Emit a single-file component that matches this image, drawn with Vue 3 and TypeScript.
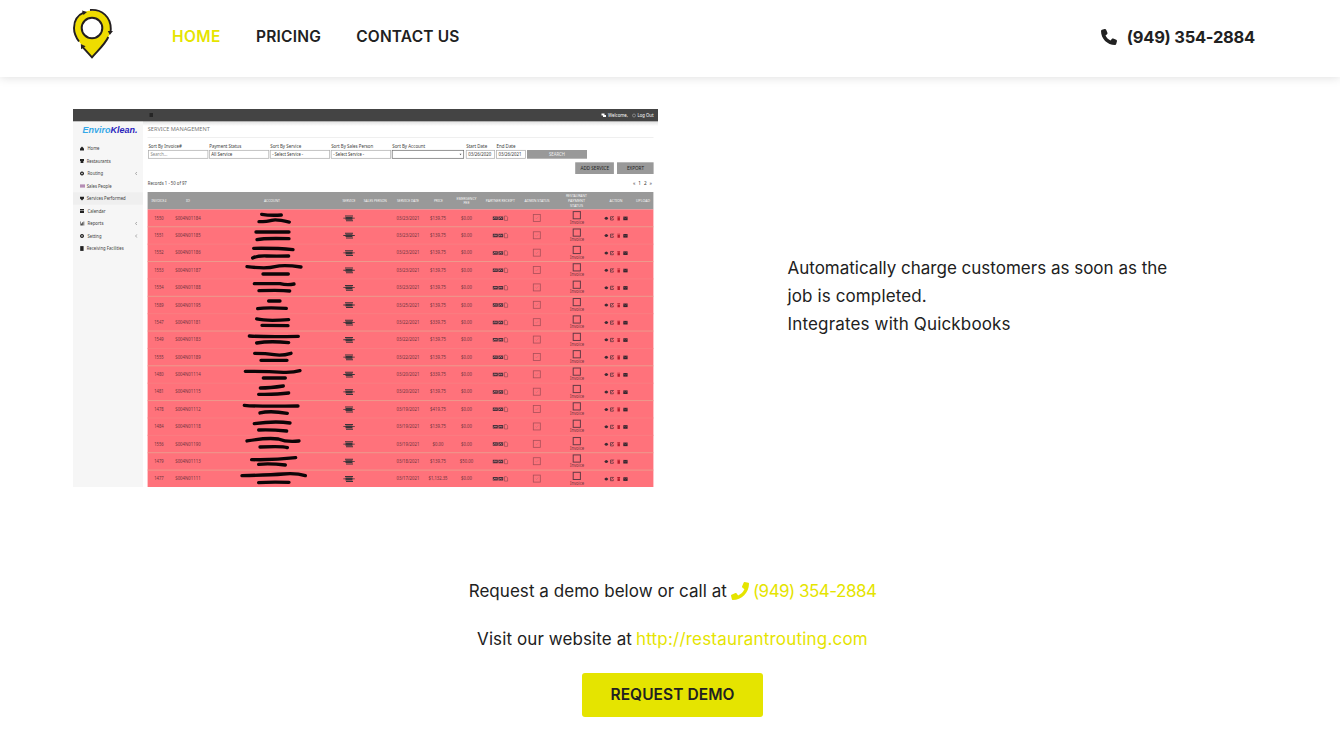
<script setup lang="ts">
interface ServiceRow {
  invoice: string
  id: string
  date: string
  price: string
  fee: string
  marks: string
}

const rowPitch = 17.38

const rows: ServiceRow[] = [
  { invoice: '1550', id: 'S004N01184', date: '03/23/2021', price: '$139.75', fee: '$0.00', marks: 'M365-107Q390-103 424-105M357-85Q382-85 395-89T448-84' },
  { invoice: '1551', id: 'S004N01185', date: '03/23/2021', price: '$139.75', fee: '$0.00', marks: 'M348-54L447-54M351-31Q370-36 447-34' },
  { invoice: '1552', id: 'S004N01186', date: '03/23/2021', price: '$139.75', fee: '$0.00', marks: 'M341-5Q410-6 459-1M338 24Q352 17 380 18T446 18' },
  { invoice: '1553', id: 'S004N01187', date: '03/23/2021', price: '$139.75', fee: '$0.00', marks: 'M321 50Q380 57 405 50T483 51M369 72L445 72' },
  { invoice: '1554', id: 'S004N01188', date: '03/23/2021', price: '$139.75', fee: '$0.00', marks: 'M343 101L420 101Q442 106 462 102M357 122Q425 120 449 123' },
  { invoice: '1589', id: 'S004N01195', date: '03/25/2021', price: '$139.75', fee: '$0.00', marks: 'M386 153L420 153M353 176Q378 172 439 175' },
  { invoice: '1547', id: 'S004N01181', date: '03/22/2021', price: '$339.75', fee: '$0.00', marks: 'M350 207Q380 214 446 209M366 226L444 227' },
  { invoice: '1549', id: 'S004N01183', date: '03/22/2021', price: '$139.75', fee: '$0.00', marks: 'M328 258Q380 261 475 259M350 279Q390 272 446 278' },
  { invoice: '1555', id: 'S004N01189', date: '03/22/2021', price: '$139.75', fee: '$0.00', marks: 'M344 310Q378 310 402 314T453 310M363 331L441 331' },
  { invoice: '1480', id: 'S004N01114', date: '03/20/2021', price: '$339.75', fee: '$0.00', marks: 'M316 364Q380 364 430 367Q460 368 480 362M370 384L436 384' },
  { invoice: '1481', id: 'S004N01115', date: '03/20/2021', price: '$139.75', fee: '$0.00', marks: 'M361 414Q390 414 430 408M356 433Q410 434 446 429' },
  { invoice: '1478', id: 'S004N01112', date: '03/19/2021', price: '$419.75', fee: '$0.00', marks: 'M313 466Q350 470 474 468M360 489Q390 481 442 490' },
  { invoice: '1484', id: 'S004N01118', date: '03/19/2021', price: '$139.75', fee: '$0.00', marks: 'M343 521Q405 512 450 519M356 540Q390 538 440 543' },
  { invoice: '1556', id: 'S004N01190', date: '03/19/2021', price: '$0.00', fee: '$0.00', marks: 'M321 573Q382 562 415 567Q440 577 477 573M360 591Q430 588 442 593' },
  { invoice: '1479', id: 'S004N01113', date: '03/18/2021', price: '$139.75', fee: '$50.00', marks: 'M335 629Q400 631 467 623M356 643Q390 640 436 645' },
  { invoice: '1477', id: 'S004N01111', date: '03/17/2021', price: '$1,132.35', fee: '$0.00', marks: 'M306 677Q390 675 430 672T496 677M356 698Q390 695 447 697' }
]

const menu = [
  { label: 'Home', w: 12, icon: 'M0 0l2-2 2 2v2h-4z', more: false },
  { label: 'Restaurants', w: 24, icon: 'M0-2h4v2h-.6v2h-2.8v-2h-.6z', more: false },
  { label: 'Routing', w: 15.5, icon: 'M2-2a2 2 0 1 0 .01 0zM2-.7a.7.7 0 1 1-.01 0z', more: true },
  { label: 'Sales People', w: 25, icon: 'M0-1.6h5v3.2h-5z', more: false },
  { label: 'Services Performed', w: 39, icon: 'M0-1.5q1-1 2 0 1-1 2 0v1.5l-2 2-2-2z', more: false },
  { label: 'Calendar', w: 18, icon: 'M0-2h4v1h-4zM0-.6h4v2.6h-4z', more: false },
  { label: 'Reports', w: 16, icon: 'M0-2h.5v4h-.5zM1 0h.8v2h-.8zM2.3-1.3h.8v3.3h-.8zM3.6-2h.6v4h-.6z', more: true },
  { label: 'Setting', w: 14, icon: 'M2-2a2 2 0 1 0 .01 0zM2-.7a.7.7 0 1 1-.01 0z', more: true },
  { label: 'Receiving Facilities', w: 37, icon: 'M.2-2.4h3.4v4.8h-3.4z', more: false }
]

const filters = [
  { label: 'Sort By Invoice#', x: 148.4, w: 59.5, lw: 33.5, value: 'Search...', vw: 17 },
  { label: 'Payment Status', x: 209.3, w: 59.5, lw: 32, value: 'All Service', vw: 21 },
  { label: 'Sort By Service', x: 270.2, w: 59.5, lw: 31, value: '- Select Service -', vw: 31 },
  { label: 'Sort By Sales Person', x: 331.2, w: 59.5, lw: 42, value: '- Select Service -', vw: 31 },
  { label: 'Sort By Account', x: 392.2, w: 71.5, lw: 33, value: '', vw: 0 },
  { label: 'Start Date', x: 466.2, w: 28.5, lw: 21, value: '03/26/2020', vw: 23 },
  { label: 'End Date', x: 496.5, w: 29, lw: 19, value: '03/26/2021', vw: 23 }
]

const heads = [
  { x: 159, w: 15, lines: ['INVOICE#'] },
  { x: 188, w: 4, lines: ['ID'] },
  { x: 272, w: 16, lines: ['ACCOUNT'] },
  { x: 349, w: 13, lines: ['SERVICE'] },
  { x: 375.3, w: 23, lines: ['SALES PERSON'] },
  { x: 408, w: 22, lines: ['SERVICE DATE'] },
  { x: 438.4, w: 9, lines: ['PRICE'] },
  { x: 466.5, w: 20, lines: ['EMERGENCY', 'FEE'] },
  { x: 500.3, w: 29, lines: ['PARTNER RECEIPT'] },
  { x: 537, w: 25, lines: ['ADMIN STATUS'] },
  { x: 576.5, w: 21, lines: ['RESTAURANT', 'PAYMENT', 'STATUS'] },
  { x: 616, w: 13, lines: ['ACTION'] },
  { x: 643, w: 14, lines: ['UPLOAD'] }
]

const rowTop = (i: number) => 209.4 + i * rowPitch
const menuY = (i: number) => 148.5 + i * 12.5
</script>

<template>
  <div class="page">
    <header class="bar">
      <svg class="logo" viewBox="0 0 42 52" width="42" height="52">
        <path d="M20.500 2.500C10 2.500 2.800 10 2.800 20C2.800 31 10 37 20 49.500C31 37 38.500 30.500 38.500 20C38.500 10 31 2.500 20.500 2.500Z" fill="#eedc00" />
        <g fill="none" stroke="#231f20" stroke-width="1.900">
          <path d="M12.500 4.200C5.500 7.200 2 13.500 2 20C2 25.200 3.800 29.200 7 33.500" />
          <path d="M18 2C30 1 38.800 9 38.800 21L38.500 24" />
          <path d="M36.300 29C33.500 35.500 27 41.500 20 49.300L10.500 38.800" />
        </g>
        <path d="M10 2.500l5 1.500-3.500 3zM35.800 23h5.200l-3.200 4zM8.800 36l4.800 2.300-4.500 3z" fill="#231f20" />
        <circle cx="20" cy="20" r="10.300" fill="#fff" stroke="#231f20" stroke-width="2" />
      </svg>
      <nav class="nav">
        <a class="active home">HOME</a>
        <a class="pricing">PRICING</a>
        <a class="contact">CONTACT US</a>
      </nav>
      <a class="tel">
        <svg viewBox="0 0 512 512" width="16" height="16" fill="currentColor"><path d="M164.900 24.600c-7.700-18.600-28-28.500-47.400-23.200l-88 24C12.100 30.200 0 46 0 64c0 247.400 200.600 448 448 448 18 0 33.800-12.100 38.600-29.500l24-88c5.300-19.400-4.600-39.700-23.200-47.400l-96-40c-16.300-6.800-35.200-2.100-46.300 11.600L304.700 368C234.300 334.700 177.300 277.700 144 207.300L193.300 167c13.700-11.200 18.400-30 11.600-46.300l-40-96z" /></svg>
        <span>(949) 354-2884</span>
      </a>
    </header>

    <main>
      <section class="feature">
        <svg class="shot" viewBox="73 109 585 378" width="585" height="378">
          <defs>
            <linearGradient id="shade" x1="0" y1="0" x2="0" y2="1">
              <stop offset="0" stop-color="#dedede" />
              <stop offset="1" stop-color="#fff" />
            </linearGradient>
          </defs>
          <rect x="73" y="109" width="585" height="378" fill="#fff" />
          <rect x="73" y="121" width="70" height="366" fill="#f6f6f6" />
          <rect x="143" y="121" width="515" height="5" fill="url(#shade)" />
          <rect x="73" y="109" width="585" height="12.300" fill="#444" />
          <rect x="149.500" y="113" width="3.500" height="4" fill="#252525" />
          <g class="small" fill="#fff">
            <path d="M601.500 113.500h3v1.500h1.500v2h-3v-1.500h-1.500z" />
            <text x="608" y="117" textLength="20" lengthAdjust="spacingAndGlyphs">Welcome,</text>
            <circle cx="634" cy="115.500" r="1.500" fill="none" stroke="#aaa" stroke-width=".6" />
            <text x="637.500" y="117" textLength="16" lengthAdjust="spacingAndGlyphs">Log Out</text>
          </g>
          <text x="82.500" y="133" class="brand" textLength="55" lengthAdjust="spacingAndGlyphs"><tspan fill="#35a8e8">Enviro</tspan><tspan fill="#2b25bd">Klean.</tspan></text>

          <rect x="73" y="192.300" width="70" height="12.500" fill="#efefef" />
          <g v-for="(m, i) in menu" :key="m.label" class="small" fill="#3c3c3c">
            <path :transform="`translate(80 ${menuY(i)})`" :d="m.icon" :fill="i === 3 ? '#b58db5' : '#222'" />
            <text :x="m.more || i === 0 || i === 5 ? 87.500 : 86.700" :y="menuY(i) + 1.600" :textLength="m.w" lengthAdjust="spacingAndGlyphs">{{ m.label }}</text>
            <path v-if="m.more" :transform="`translate(135.500 ${menuY(i)})`" d="M1.300-1.500l-1.200 1.500 1.200 1.500" fill="none" stroke="#777" stroke-width=".6" />
          </g>

          <text x="147.800" y="131.400" class="title" textLength="62" lengthAdjust="spacingAndGlyphs">SERVICE MANAGEMENT</text>
          <path d="M147.500 137.500h506" stroke="#ebebeb" stroke-width=".8" />
          <g v-for="(f, i) in filters" :key="f.label" class="small" fill="#3c3c3c">
            <text :x="f.x" y="147.800" :textLength="f.lw" lengthAdjust="spacingAndGlyphs">{{ f.label }}</text>
            <rect :x="f.x" y="150.300" :width="f.w" height="8" fill="#fff" :stroke="i === 4 ? '#666' : '#aaa'" stroke-width=".7" />
            <text v-if="f.value" :x="f.x + 2" y="155.800" :textLength="f.vw" lengthAdjust="spacingAndGlyphs" :fill="i === 0 ? '#888' : '#333'">{{ f.value }}</text>
          </g>
          <path d="M459.500 153.800h2l-1 1.400z" fill="#555" />
          <g fill="#999">
            <rect x="527" y="150" width="60" height="8.700" />
            <rect x="575.200" y="162.300" width="38.700" height="11.700" />
            <rect x="617" y="162.300" width="36.600" height="11.700" />
          </g>
          <text x="549" y="155.800" class="small" fill="#f0f0f0" textLength="16" lengthAdjust="spacingAndGlyphs">SEARCH</text>
          <text x="580.500" y="169.900" class="small" fill="#222" textLength="28.500" lengthAdjust="spacingAndGlyphs">ADD SERVICE</text>
          <text x="627" y="169.900" class="small" fill="#222" textLength="17" lengthAdjust="spacingAndGlyphs">EXPORT</text>
          <text x="147.800" y="185.200" class="small" fill="#444" textLength="39" lengthAdjust="spacingAndGlyphs">Records 1 - 50 of 97</text>
          <text x="633" y="185.200" class="small" fill="#333" textLength="19">« 1 2 »</text>

          <rect x="147.600" y="192" width="505.800" height="17.500" fill="#999" />
          <g v-for="h in heads" :key="h.x" class="head">
            <text v-for="(line, k) in h.lines" :key="line" :x="h.x" :y="202 + (k - (h.lines.length - 1) / 2) * 4.800" :textLength="k === 0 ? h.w : undefined" lengthAdjust="spacingAndGlyphs">{{ line }}</text>
          </g>
          <rect x="147.600" y="209.400" width="505.800" height="277.600" fill="#ff727b" />
          <g v-for="(r, i) in rows" :key="r.id" :transform="`translate(0 ${rowTop(i)})`">
            <path v-if="i" d="M147.600 0h505.800" :stroke="[1, 3, 5, 7, 9, 11, 14, 15].includes(i) ? '#eb9f8f' : '#f97f82'" stroke-width=".9" />
            <g class="cell">
              <text x="159" y="10.300" textLength="9.500" lengthAdjust="spacingAndGlyphs">{{ r.invoice }}</text>
              <text x="188" y="10.300" textLength="25.500" lengthAdjust="spacingAndGlyphs">{{ r.id }}</text>
              <text x="408" y="10.300" textLength="23" lengthAdjust="spacingAndGlyphs">{{ r.date }}</text>
              <text x="438" y="10.300" :textLength="r.price.length > 8 ? 19 : r.price.length < 6 ? 11 : 16" lengthAdjust="spacingAndGlyphs">{{ r.price }}</text>
              <text x="466.500" y="10.300" :textLength="r.fee.length > 5 ? 13.500 : 11" lengthAdjust="spacingAndGlyphs">{{ r.fee }}</text>
              <text x="577" y="14.500" textLength="14" lengthAdjust="spacingAndGlyphs">Invoice</text>
            </g>
            <path d="M345 6h8v1h-8zM345.500 7.500h7v2.800h-7zM343.300 8.300h11.500v.8h-11.500zM346 10.800h7v1h-7z" fill="#3a3539" />
            <path d="M492.800 7h5v3.500h-5zM498.400 7h4.800v3.500h-4.800z" fill="#49303a" />
            <path d="M493.500 9.500l1.300-1.500 1 1 1-.6M499 9.500l1.300-1.500 1 1 1-.6" fill="none" stroke="#e8989c" stroke-width=".7" />
            <path d="M504.500 6.600h2l1.100 1.200v3.200h-3.100z" fill="none" stroke="#854850" stroke-width=".6" />
            <rect x="533.300" y="5" width="7" height="7" fill="none" stroke="#a94f59" stroke-width=".8" />
            <path d="M535.500 8.500l1 1 2-2.300" fill="none" stroke="#b9747b" stroke-width=".5" />
            <rect x="573.200" y="2.200" width="7.200" height="7.200" fill="none" stroke="#653b45" stroke-width="1" />
            <path d="M604.300 8.800q2-3 4 0-2 3-4 0" fill="#3a2a32" />
            <path d="M613.500 7.300h-3v3.300h2.800v-1.500M611.300 9.500l2.300-2.500" fill="none" stroke="#533039" stroke-width=".7" />
            <path d="M617.300 7h2.800v.8h-2.800zM617.500 8.100h2.400v2.900h-2.400z" fill="#b91d2b" />
            <path d="M623.300 7.200h4.300v3.600h-4.300z" fill="#32262e" />
            <path d="M623.300 7.800l2.100 1.300 2.200-1.300" fill="none" stroke="#c95c66" stroke-width=".4" />
          </g>
          <g transform="translate(140 250) scale(.3333)" fill="none" stroke="#0c0507" stroke-width="10" stroke-linecap="round" stroke-linejoin="round">
            <path v-for="r in rows" :key="r.id" :d="r.marks" />
          </g>
        </svg>
        <div class="copy">
          <p class="l1">Automatically charge customers as soon as the</p>
          <p class="l2">job is completed.</p>
          <p class="l3">Integrates with Quickbooks</p>
        </div>
      </section>

      <section class="cta">
        <p class="call">
          <span class="c1">Request a demo below or call at</span>
          <svg viewBox="0 0 512 512" width="18" height="18" fill="#e5e400"><path d="M493.400 24.600l-104-24c-11.300-2.600-22.900 3.300-27.500 13.900l-48 112c-4.200 9.800-1.400 21.300 6.900 28l60.600 49.600c-36 76.700-98.900 140.500-177.200 177.200l-49.600-60.600c-6.800-8.300-18.200-11.100-28-6.900l-112 48C3.900 366.500-2 378.100.6 389.400l24 104C27.100 504.200 36.700 512 48 512c256.100 0 464-207.500 464-464 0-11.200-7.700-20.900-18.600-23.400z" /></svg>
          <a class="c2">(949) 354-2884</a>
        </p>
        <p class="visit">
          <span class="c3">Visit our website at</span>
          <a class="c4">http://restaurantrouting.com</a>
        </p>
        <button class="demo" type="button"><span>REQUEST DEMO</span></button>
      </section>
    </main>
  </div>
</template>

<style>
body {
  margin: 0;
  background: #fff;
}
</style>

<style scoped>
.page {
  width: 1340px;
  height: 744px;
  overflow: hidden;
  color: #212121;
  font-family: Inter, "Liberation Sans", sans-serif;
  font-size: 17px;
}
.bar {
  display: flex;
  align-items: flex-start;
  box-sizing: border-box;
  height: 77px;
  padding: 8px 85px 0 72px;
  box-shadow: 0 0 10px rgba(0, 0, 0, 0.15);
}
.logo {
  flex: none;
}
.nav {
  display: flex;
  gap: 35px;
  margin-left: 58px;
  padding-top: 17px;
  font-size: 15.5px;
  font-weight: 600;
  line-height: 24px;
}
.nav a {
  white-space: nowrap;
}
.home {
  letter-spacing: 0.45px;
}
.pricing {
  letter-spacing: 0.25px;
}
.contact {
  letter-spacing: 0.17px;
}
.active {
  color: #e5e400;
}
.tel {
  display: flex;
  align-items: center;
  gap: 10px;
  margin-left: auto;
  padding-top: 17px;
  font-size: 16.5px;
  font-weight: 650;
  letter-spacing: -0.25px;
  line-height: 24px;
}
.feature {
  display: flex;
  gap: 129.5px;
  margin: 32px 0 0 73px;
}
.shot {
  flex: none;
  display: block;
  font-family: "Noto Sans", sans-serif;
}
.small {
  font-size: 4.7px;
}
.title {
  font-size: 5.8px;
  fill: #777;
}
.brand {
  font: italic 700 8.2px "Liberation Sans", sans-serif;
}
.head {
  font-size: 3.8px;
  fill: #f4f4f4;
  text-anchor: middle;
}
.cell {
  font-size: 4.7px;
  fill: #6f343e;
  text-anchor: middle;
}
.copy {
  padding-top: 145px;
}
.copy p {
  margin: 0;
  line-height: 28px;
  white-space: nowrap;
}
.copy .l2 {
  letter-spacing: 0.12px;
}
.copy .l3 {
  letter-spacing: 0.16px;
}
.cta {
  display: flex;
  flex-direction: column;
  align-items: center;
  padding: 90px 0 0 5px;
}
.cta p {
  display: flex;
  align-items: center;
  gap: 4px;
  height: 28px;
  margin: 0 0 20px;
  line-height: 28px;
  white-space: nowrap;
}
.cta a {
  color: #e5e400;
}
.c1 {
  letter-spacing: 0.05px;
}
.cta .c2 {
  letter-spacing: -0.52px;
}
.c3 {
  letter-spacing: 0.1px;
}
.cta .c4 {
  letter-spacing: 0.2px;
}
.demo {
  width: 181px;
  height: 44px;
  padding: 0;
  border: 0;
  border-radius: 3px;
  background: #e5e400;
  color: #212121;
  font: 600 15.5px/44px Inter, "Liberation Sans", sans-serif;
  letter-spacing: 0.06px;
}
</style>
